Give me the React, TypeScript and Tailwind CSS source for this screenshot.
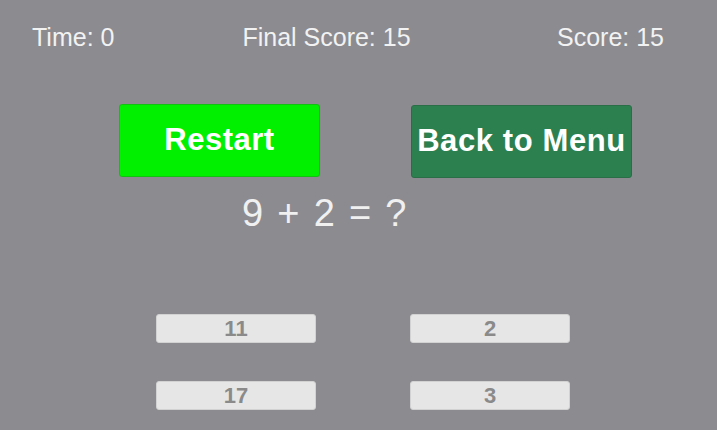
export default function App() {
  const answers = ['11', '2', '17', '3']

  return (
    <div className="w-[717px] h-[430px] bg-[#8c8b90] overflow-hidden flex flex-col" style={{ fontFamily: '"Liberation Sans", Arial, sans-serif' }}>

      {/* Header */}
      <div className="flex items-center h-[29px] mt-[23px] text-[25px] text-[#f2f2f2] leading-none">
        <span className="ml-[32px]">Time: 0</span>
        <span className="ml-[128px]">Final Score: 15</span>
        <span className="ml-auto mr-[53px]">Score: 15</span>
      </div>

      {/* Action buttons */}
      <div className="flex items-start mt-[52px] ml-[119px] gap-[91px]">
        <button className="w-[201px] h-[73px] bg-[#00f000] rounded-[3px] border border-[#12c012] text-white text-[31px] font-bold tracking-[0.5px]">
          Restart
        </button>
        <button className="w-[221px] h-[73px] mt-[1px] bg-[#2c8050] rounded-[3px] border border-[#2a6e48] text-white text-[31px] font-bold tracking-[0.6px]">
          Back to Menu
        </button>
      </div>

      {/* Question */}
      <div className="ml-[242px] w-[166px] mt-[12px] text-center text-[38px] leading-[46px] text-[#f0f0f0] tracking-[1.8px] whitespace-nowrap">
        9 + 2 = ?
      </div>

      {/* Answers */}
      <div className="grid grid-cols-[160px_160px] gap-x-[94px] gap-y-[38px] ml-[156px] mt-[78px]">
        {answers.map(a => (
          <button key={a} className="h-[29px] bg-[#e6e6e6] rounded-[3px] border border-[#d2d2d2] text-[#8a8a8a] text-[22px] font-bold leading-none">
            {a}
          </button>
        ))}
      </div>
    </div>
  )
}
